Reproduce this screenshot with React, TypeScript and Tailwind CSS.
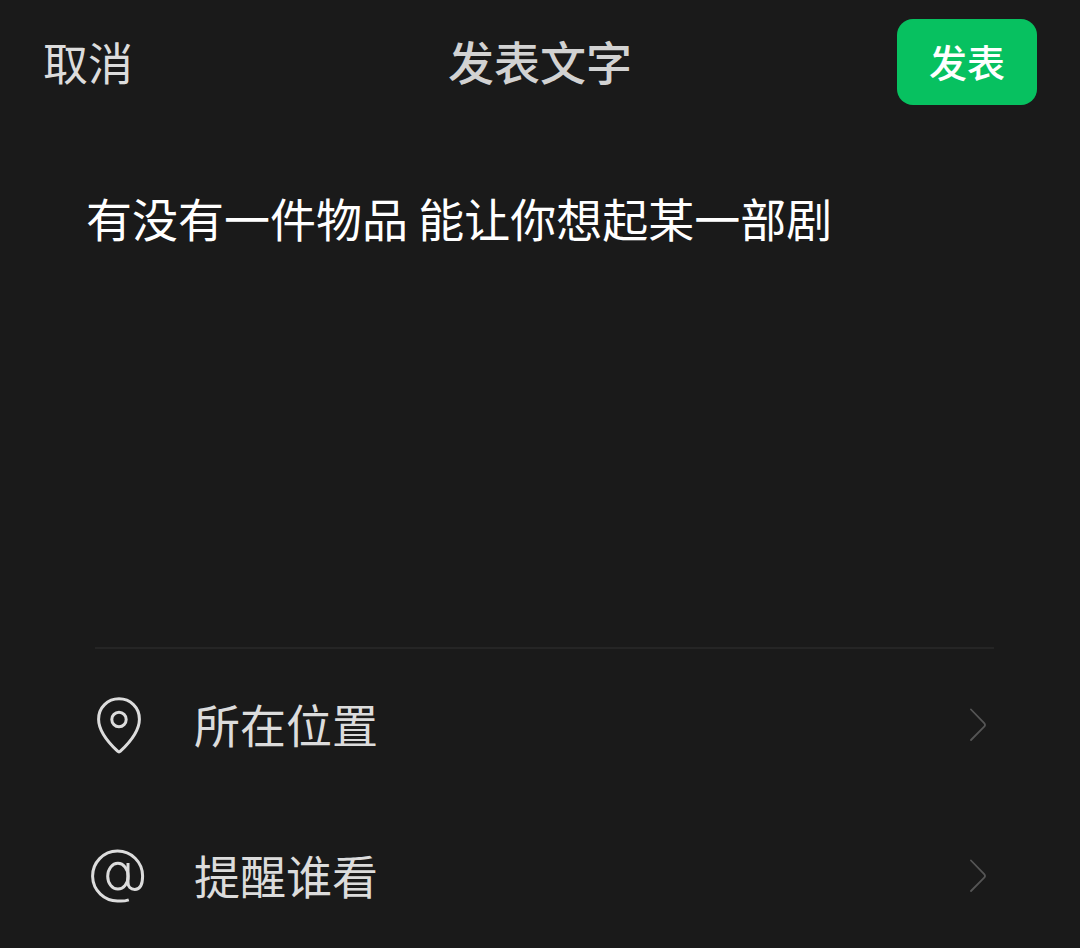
import type { ReactNode } from "react";

function PinIcon() {
  return (
    <svg viewBox="0 0 56 60" className="h-[60px] w-14" fill="none" stroke="currentColor" strokeWidth="3" strokeLinejoin="round" aria-hidden="true">
      <path d="M26.600 56.200C20 50 7.600 36.500 7.600 24.200C7.600 12.600 16.600 3.800 28 3.800S48.400 12.600 48.400 24.200C48.400 36.500 36 50 29.400 56.200Q28 57.500 26.600 56.200Z" />
      <circle cx="28" cy="24.500" r="7.200" />
    </svg>
  );
}

function AtIcon() {
  return (
    <svg viewBox="0 0 56 60" className="h-[60px] w-14" fill="none" stroke="currentColor" strokeWidth="3" aria-hidden="true">
      <path d="M37.800 53.800A25 25 0 0 1 27.400 55A25 25 0 1 1 51.600 30C51.600 38.500 49 43.400 43.800 43.400C39.500 43.400 37 40.500 37 36.500V17" />
      <ellipse cx="26.900" cy="30.200" rx="10.200" ry="12.900" />
    </svg>
  );
}

function ChevronIcon() {
  return (
    <svg viewBox="0 0 18 34" className="h-[34px] w-[18px] text-[#555555]" fill="none" stroke="currentColor" strokeWidth="1.8" strokeLinecap="round" strokeLinejoin="round" aria-hidden="true">
      <path d="M2 1.500L15.200 15.200Q16.800 17 15.200 18.600L2 32" />
    </svg>
  );
}

function OptionRow({ icon, label }: { icon: ReactNode; label: string }) {
  return (
    <button type="button" className="flex h-[104px] w-full items-center text-left text-[#dcdcdc]">
      {icon}
      <span className="ml-[47px] flex-1 pb-1 text-[46px] leading-[64px]">{label}</span>
      <ChevronIcon />
    </button>
  );
}

export default function App() {
  return (
    <main className="flex min-h-screen flex-col bg-[#1a1a1a] font-['Noto_Sans_CJK_SC',sans-serif]">
      <header className="grid grid-cols-[1fr_auto_1fr] items-center px-[43px] pt-[19px]">
        <button type="button" className="justify-self-start text-[45px] leading-[64px] text-[#dcdcdc]">
          取消
        </button>
        <h1 id="page-title" className="pb-1 text-[46px] leading-[64px] font-medium text-[#d2d2d2]">
          发表文字
        </h1>
        <button type="button" className="h-[86px] w-[140px] justify-self-end rounded-2xl bg-[#07c160] pb-1 text-[38px] font-medium text-white">
          发表
        </button>
      </header>
      <textarea
        aria-labelledby="page-title"
        className="mt-20 block min-h-[400px] flex-1 resize-none bg-transparent px-[86px] text-[46px] leading-[64px] text-white outline-none"
        defaultValue="有没有一件物品 能让你想起某一部剧"
      />
      <section className="mr-[86px] ml-[95px] border-t-2 border-[#252525]" />
      <section className="flex flex-col gap-[47px] pt-6 pr-[93px] pb-5 pl-[91px]">
        <OptionRow icon={<PinIcon />} label="所在位置" />
        <OptionRow icon={<AtIcon />} label="提醒谁看" />
      </section>
    </main>
  );
}
